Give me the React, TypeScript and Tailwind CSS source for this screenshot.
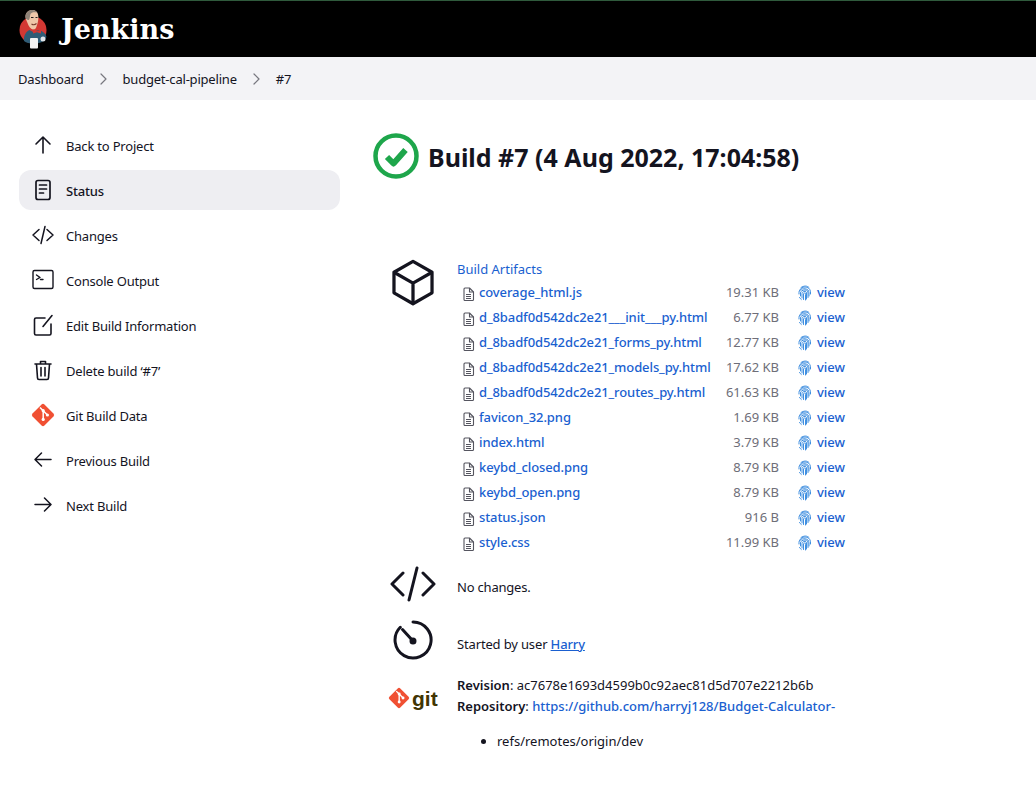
import React from "react";

const S = { fill: "none", stroke: "currentColor", strokeLinecap: "round" as const, strokeLinejoin: "round" as const };

function GitDiamond({ size }: { size: number }) {
  return (
    <svg width={size} height={size} viewBox="0 0 24 24">
      <rect x="3.6" y="3.6" width="16.8" height="16.8" rx="2" transform="rotate(45 12 12)" fill="#f05033" />
      <path d="M9 4.500l3.200 3.200M12.200 7.700v8.300M12.200 7.700l4 4" stroke="#fff" strokeWidth="1.500" fill="none" />
      <circle cx="12.200" cy="7.700" r="1.600" fill="#fff" />
      <circle cx="12.200" cy="16.400" r="1.600" fill="#fff" />
      <circle cx="16.400" cy="12" r="1.600" fill="#fff" />
    </svg>
  );
}

function JenkinsLogo() {
  return (
    <svg width="30" height="40" viewBox="0 0 30 40">
      <circle cx="14" cy="21" r="13.500" fill="#d33833" />
      <path d="M6.500 7C7 3 10 1 13.500 1c3.500 0 5.500 2.500 5.800 6 .3 3-.3 7-1.800 10.500-.5 2-2 3.500-3.500 3-2.500-.5-4.500-3.500-5.500-6.500C7.500 11.500 6.300 9.500 6.500 7z" fill="#efc6a8" />
      <path d="M6.500 8C6.300 3.500 10 .8 13.500 1c2.200.1 3.600 1 4.500 2.500-3-.8-5.500-.3-6.500 1.500-.5 1.500-.5 4-1.500 6C8 11 6.600 10 6.500 8z" fill="#8f8378" />
      <path d="M12 8.500h2.500M16.500 8.500h2" stroke="#231f20" strokeWidth="1" />
      <path d="M12.500 15c1.500 1 3.500 1 5-.5" stroke="#7a3b2e" strokeWidth="1.100" fill="none" />
      <path d="M5 32c-.5-5 1.500-9 5.500-11l3.500 2 6-2c3.500 1 6.500 3 7.500 7l-3 4c-5 3.500-15 3.500-19.500 0z" fill="#2f5c76" />
      <path d="M14 20.500l4 1.800 4-1.800v4l-4-1.300-4 1.300z" fill="#d33833" />
      <rect x="11" y="29" width="8" height="10.500" rx="1" fill="#f2f2f2" />
      <circle cx="24" cy="30" r="2.500" fill="#dfe4e8" />
    </svg>
  );
}

const ic = {
  up: <svg width="24" height="24" viewBox="0 0 24 24" {...S} strokeWidth="1.600"><path d="M12 20V4.500M5 11l7-7 7 7" /></svg>,
  status: <svg width="24" height="24" viewBox="0 0 24 24" {...S} strokeWidth="1.700"><rect x="5" y="2.500" width="14" height="19" rx="2" /><path d="M8.500 7h7M8.500 11h7M8.500 15h4" /></svg>,
  code: <svg width="24" height="24" viewBox="0 0 24 24" {...S} strokeWidth="1.500"><path d="M8 6.500L2 12l6 5.500M16 6.500l6 5.500-6 5.500M14 3.500L10 20.500" /></svg>,
  term: <svg width="24" height="24" viewBox="0 0 24 24" {...S} strokeWidth="1.400"><rect x="2" y="2.500" width="20" height="18" rx="1.500" /><path d="M5.500 7l3.500 2.500L5.500 11.500M9.500 11.500h2.500" /></svg>,
  edit: <svg width="24" height="24" viewBox="0 0 24 24" {...S} strokeWidth="1.600"><path d="M14 5H5a1.500 1.500 0 0 0-1.500 1.500v14A1.500 1.500 0 0 0 5 22h13.500a1.500 1.500 0 0 0 1.500-1.500V11M12 13.500L21 2.500" /></svg>,
  trash: <svg width="24" height="24" viewBox="0 0 24 24" {...S} strokeWidth="1.600"><path d="M4 6h16M9.500 6V3.500h5V6M5.500 6l1 14a1.500 1.500 0 0 0 1.500 1.500h8a1.500 1.500 0 0 0 1.500-1.500l1-14M10 9.500v8.500M14 9.500v8.500" /></svg>,
  left: <svg width="24" height="24" viewBox="0 0 24 24" {...S} strokeWidth="1.500"><path d="M20 11.500H4.500M10.500 5L4 11.500l6.500 6.500" /></svg>,
  right: <svg width="24" height="24" viewBox="0 0 24 24" {...S} strokeWidth="1.500"><path d="M4 11.500h15.500M13.500 5l6.500 6.500-6.500 6.500" /></svg>,
};

const side: [React.ReactNode, string, boolean?][] = [
  [ic.up, "Back to Project"],
  [ic.status, "Status", true],
  [ic.code, "Changes"],
  [ic.term, "Console Output"],
  [ic.edit, "Edit Build Information"],
  [ic.trash, "Delete build ‘#7’"],
  [<GitDiamond size={26} />, "Git Build Data"],
  [ic.left, "Previous Build"],
  [ic.right, "Next Build"],
];

const files: [string, string][] = [
  ["coverage_html.js", "19.31 KB"],
  ["d_8badf0d542dc2e21___init___py.html", "6.77 KB"],
  ["d_8badf0d542dc2e21_forms_py.html", "12.77 KB"],
  ["d_8badf0d542dc2e21_models_py.html", "17.62 KB"],
  ["d_8badf0d542dc2e21_routes_py.html", "61.63 KB"],
  ["favicon_32.png", "1.69 KB"],
  ["index.html", "3.79 KB"],
  ["keybd_closed.png", "8.79 KB"],
  ["keybd_open.png", "8.79 KB"],
  ["status.json", "916 B"],
  ["style.css", "11.99 KB"],
];

function FileIcon() {
  return (
    <svg width="13" height="14" viewBox="0 0 13 14" fill="none" stroke="#55555f" strokeWidth="1.100" strokeLinejoin="round">
      <path d="M2 2a1 1 0 0 1 1-1h4.500L11.500 5v7.500a1 1 0 0 1-1 1H3a1 1 0 0 1-1-1z" />
      <path d="M7.500 1v4h4M4 7.500h5M4 9.500h5M4 11.500h5" />
    </svg>
  );
}

function Fingerprint() {
  return (
    <svg width="14" height="16" viewBox="0 0 14 16" fill="none" stroke="#3f8fe0" strokeWidth="1" strokeLinecap="round">
      <path d="M3 2.500C6 .5 9 .5 11 2.500" />
      <path d="M1.500 6C2 3.500 4.500 2 7 2s5 1.500 5.500 4.500V9" />
      <path d="M1 9V7.500C1 5 3.500 3.500 7 3.800c2.500.2 4 1.700 4 4V11" />
      <path d="M2.500 11V8c0-2 2-3 4.500-3s3 1.500 3 3v4.500" />
      <path d="M4 13V8.500C4 7 5.500 6.500 7 6.500S8.500 7.500 8.500 9v5" />
      <path d="M5.500 14.500V9c0-.8.700-1 1.500-1s.5 1 .5 2v5" />
      <path d="M1.500 12.500c.5.800 1 1.300 1.800 2" />
    </svg>
  );
}

export default function App() {
  return (
    <div className="min-h-[795px] bg-white text-[#14141f] text-[13px] leading-[20px] font-['Noto_Sans','Open_Sans',sans-serif]">
      <header className="h-[57px] bg-black border-t border-[#2f5a3c] flex items-center pl-[19px] gap-[12px]">
        <JenkinsLogo />
        <span className="font-['DejaVu_Serif',serif] font-bold text-white text-[27px] leading-none">Jenkins</span>
      </header>
      <nav className="h-[43px] bg-[#f3f3f6] flex items-center pl-[18px] tracking-[-0.2px]">
        <span>Dashboard</span>
        <svg className="ml-[16px] mr-[16px] text-[#77777f]" width="7" height="12" viewBox="0 0 7 12" {...S} strokeWidth="1.200"><path d="M1 1l5 5-5 5" /></svg>
        <span>budget-cal-pipeline</span>
        <svg className="ml-[16px] mr-[16px] text-[#77777f]" width="7" height="12" viewBox="0 0 7 12" {...S} strokeWidth="1.200"><path d="M1 1l5 5-5 5" /></svg>
        <span>#7</span>
      </nav>
      <div className="flex">
        <aside className="w-[321px] ml-[19px] mt-[25px] flex flex-col gap-[5px] tracking-[-0.2px]">
          {side.map(([icon, label, active]) => (
            <div key={label} className={`h-[40px] flex items-center rounded-[12px] pl-[12px] gap-[11px] ${active ? "bg-[#eeeef2] font-medium" : ""}`}>
              <span className="w-[24px] h-[24px] flex items-center justify-center shrink-0">{icon}</span>
              <span className="pt-[2px]">{label}</span>
            </div>
          ))}
        </aside>
        <main className="ml-[33px] flex-1">
          <div className="flex items-center mt-[32px] h-[48px] gap-[9px]">
            <svg width="46" height="46" viewBox="0 0 46 46">
              <circle cx="23" cy="23" r="20.500" fill="none" stroke="#1ea64b" strokeWidth="4.500" />
              <path d="M14 24l6.500 6.500L32.500 17" fill="none" stroke="#1ea64b" strokeWidth="6" strokeLinejoin="round" />
            </svg>
            <h1 className="text-[25px] font-bold leading-none pt-[2px]">Build #7 (4 Aug 2022, 17:04:58)</h1>
          </div>
          <div className="flex mt-[79px] ml-[17px]">
            <div className="w-[67px]">
              <svg className="block -ml-[2px] -mt-[2px]" width="50" height="50" viewBox="0 0 46 46" fill="none" stroke="#14141f" strokeWidth="3" strokeLinejoin="round">
                <path d="M23 4l17.500 10v19L23 43 5.500 33V14z" />
                <path d="M5.500 14L23 24l17.500-10M23 24v19" />
              </svg>
            </div>
            <div>
              <a className="text-[#1a5fd0] block h-[20px]">Build Artifacts</a>
              <div className="flex flex-col">
                {files.map(([n, s]) => (
                  <div key={n} className="h-[25px] flex items-center">
                    <span className="w-[22px] pl-[5px] pt-[4px] shrink-0"><FileIcon /></span>
                    <a className="w-[230px] text-[#1a5fd0] font-medium whitespace-nowrap tracking-[-0.1px]">{n}</a>
                    <span className="w-[70px] text-right text-[#6e6e78]">{s}</span>
                    <span className="ml-[19px] w-[19px] pt-[3px] shrink-0"><Fingerprint /></span>
                    <a className="text-[#1a5fd0] font-medium">view</a>
                  </div>
                ))}
              </div>
            </div>
          </div>
          <div className="flex items-center ml-[17px] mt-[5px] h-[50px]">
            <div className="w-[67px]">
              <svg width="46" height="36" viewBox="0 0 46 36" {...S} strokeWidth="3"><path d="M13 7L2 18l11 11M33 7l11 11-11 11M27 2L19 34" /></svg>
            </div>
            <span className="pt-[5px] tracking-[-0.2px]">No changes.</span>
          </div>
          <div className="flex items-center ml-[17px] mt-[6px] h-[50px]">
            <div className="w-[67px] pl-[3px]">
              <svg width="40" height="40" viewBox="0 0 40 40" {...S} strokeWidth="3"><path d="M20 2a18 18 0 1 1-12.700 5.300" /><path d="M9.500 9.500l10.500 11.500" strokeWidth="3" /><circle cx="20" cy="21" r="2" fill="currentColor" /></svg>
            </div>
            <span className="pt-[8px] tracking-[-0.15px]">Started by user <a className="text-[#1a5fd0] underline font-medium">Harry</a></span>
          </div>
          <div className="flex ml-[15px] mt-[10px]">
            <div className="w-[69px] flex items-center h-[40px] gap-[2px] mt-[3px]">
              <GitDiamond size={22} />
              <span className="font-['Liberation_Sans',sans-serif] font-bold text-[21px] text-[#413503] leading-none">git</span>
            </div>
            <div>
              <div className="h-[21px]"><b className="font-semibold">Revision</b>: ac7678e1693d4599b0c92aec81d5d707e2212b6b</div>
              <div className="h-[21px]"><b className="font-semibold">Repository</b>: <a className="text-[#1a5fd0] font-medium">https://github.com/harryj128/Budget-Calculator-</a></div>
              <ul className="mt-[14px] ml-[40px] list-disc"><li>refs/remotes/origin/dev</li></ul>
            </div>
          </div>
        </main>
      </div>
    </div>
  );
}
